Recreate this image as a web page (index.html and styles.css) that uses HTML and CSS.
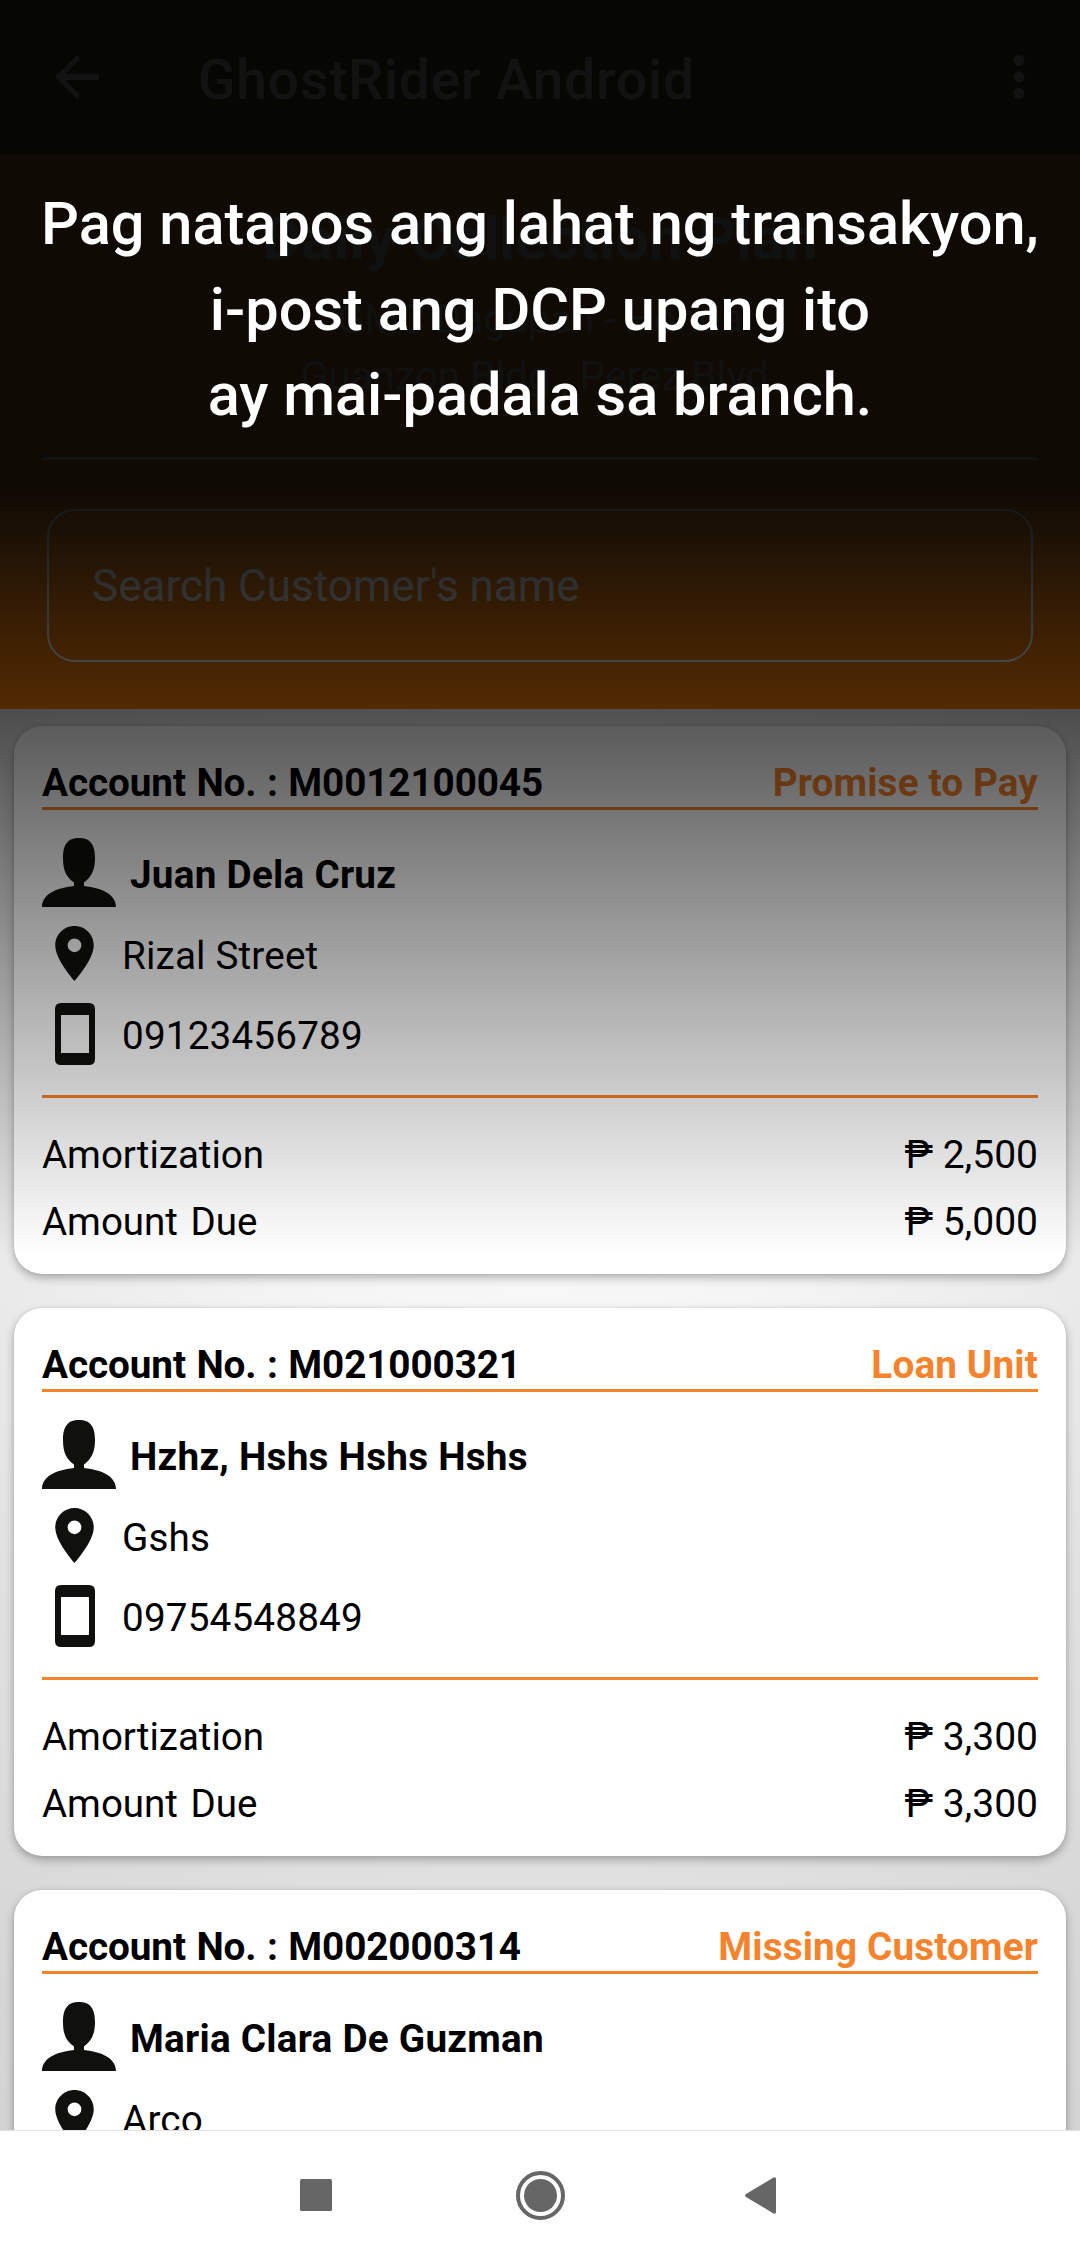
FILE: index.html
```html
<!DOCTYPE html>
<html lang="fil">
<head>
<meta charset="utf-8">
<title>GhostRider Android</title>
<link rel="stylesheet" href="styles.css">
</head>
<body>
<svg class="defs" aria-hidden="true">
  <symbol id="person" viewBox="0 0 74 69">
    <path d="M37 0C27 0 21 5 21 20C21 33 24.500 39 32 44.500V48C13 50 0 57 0 69H74C74 57 61 50 42 48V44.500C49 39 53 33 53 20C53 5 47 0 37 0Z"/>
  </symbol>
  <symbol id="pin" viewBox="5 2 14 20">
    <path fill-rule="evenodd" d="M12 2C8.130 2 5 5.130 5 9c0 5.250 7 13 7 13s7-7.750 7-13c0-3.870-3.130-7-7-7zm0 9.500a2.500 2.500 0 1 1 0-5 2.500 2.500 0 0 1 0 5z"/>
  </symbol>
  <symbol id="phone" viewBox="0 0 40 62">
    <path fill-rule="evenodd" d="M6 0H34Q40 0 40 6V56Q40 62 34 62H6Q0 62 0 56V6Q0 0 6 0ZM6 12V50H34V12Z"/>
  </symbol>
</svg>
<div class="screen">
  <header class="appbar">
    <svg class="back" viewBox="0 0 44 44"><path d="M44 19H10.500L25 4 22 0 0 22 22 44 25 40 10.500 25H44Z"/></svg>
    <h1 class="appbar-title">GhostRider Android</h1>
    <svg class="more" viewBox="0 0 12 46"><circle cx="6" cy="6.500" r="5.500"/><circle cx="6" cy="23" r="5.500"/><circle cx="6" cy="39.500" r="5.500"/></svg>
  </header>
  <section class="hero">
    <h2 class="plan">Daily Collection Plan</h2>
    <p class="branch">GMC Dagupan - Honda</p>
    <p class="address">Guanzon Bldg., Perez Blvd.</p>
    <div class="search">Search Customer's name</div>
  </section>
  <main class="list">
    <article class="card">
      <div class="card-head"><span class="account">Account No. : M0012100045</span><span class="status">Promise to Pay</span></div>
      <div class="name"><svg class="i-person"><use href="#person"/></svg><span>Juan Dela Cruz</span></div>
      <div class="info"><svg class="i-pin"><use href="#pin"/></svg><span>Rizal Street</span></div>
      <div class="info tel"><svg class="i-phone"><use href="#phone"/></svg><span>09123456789</span></div>
      <div class="amounts">
        <div class="row"><span class="label">Amortization</span><span class="value">₱ 2,500</span></div>
        <div class="row"><span class="label">Amount Due</span><span class="value">₱ 5,000</span></div>
      </div>
    </article>
    <article class="card">
      <div class="card-head"><span class="account">Account No. : M021000321</span><span class="status">Loan Unit</span></div>
      <div class="name"><svg class="i-person"><use href="#person"/></svg><span>Hzhz, Hshs Hshs Hshs</span></div>
      <div class="info"><svg class="i-pin"><use href="#pin"/></svg><span>Gshs</span></div>
      <div class="info tel"><svg class="i-phone"><use href="#phone"/></svg><span>09754548849</span></div>
      <div class="amounts">
        <div class="row"><span class="label">Amortization</span><span class="value">₱ 3,300</span></div>
        <div class="row"><span class="label">Amount Due</span><span class="value">₱ 3,300</span></div>
      </div>
    </article>
    <article class="card">
      <div class="card-head"><span class="account">Account No. : M002000314</span><span class="status">Missing Customer</span></div>
      <div class="name"><svg class="i-person"><use href="#person"/></svg><span>Maria Clara De Guzman</span></div>
      <div class="info"><svg class="i-pin"><use href="#pin"/></svg><span>Arco</span></div>
    </article>
  </main>
  <nav class="navbar">
    <svg viewBox="0 0 48 48"><rect x="8" y="8" width="32" height="32" rx="1.500"/></svg>
    <svg viewBox="0 0 48 48"><circle cx="24.500" cy="24.500" r="16.500"/><circle class="ring" cx="24.500" cy="24.500" r="22.500"/></svg>
    <svg viewBox="0 0 48 48"><path d="M36 8V41Q36 43.500 33.500 42.500L6 26Q4 24.500 6 23L33.500 6.500Q36 5.500 36 8Z"/></svg>
  </nav>
  <div class="scrim">
    <p class="tip">Pag natapos ang lahat ng transakyon,<br>i-post ang DCP upang ito<br>ay mai-padala sa branch.</p>
  </div>
</div>
</body>
</html>
```

FILE: styles.css
```css
* { box-sizing: border-box; margin: 0; padding: 0; }
body { font-family: Roboto, "Noto Sans", sans-serif; color: #000; }
svg { fill: #10100e; flex: none; }
.defs { display: none; }
.screen {
  position: relative;
  width: 1080px;
  height: 2260px;
  overflow: hidden;
  display: flex;
  flex-direction: column;
}
.appbar {
  flex: none;
  height: 154px;
  background: #4e4e2c;
  color: #fff;
  display: flex;
  align-items: center;
  padding: 0 55px 0 55px;
}
.appbar svg { fill: #fff; }
.back { width: 44px; height: 44px; }
.appbar-title {
  flex: 1;
  margin-left: 99px;
  padding-top: 5px;
  font-size: 55px;
  font-weight: 500;
  letter-spacing: .9px;
}
.more { width: 12px; height: 46px; }

.hero {
  flex: none;
  height: 555px;
  background: linear-gradient(to bottom, #dc8f38 0, #dc8f38 300px, #f47e09 480px);
  color: #e4eeee;
  text-align: center;
  padding: 50px 42px 0;
}
.plan { font-size: 60px; line-height: 70px; font-weight: 700; }
.branch { font-size: 40px; line-height: 48px; margin-top: 22px; }
.address {
  font-size: 40.500px;
  line-height: 50px;
  margin-top: 7px;
  padding-bottom: 56px;
  border-bottom: 3px solid #f0fbff;
}
.search {
  height: 153px;
  margin: 49px 5px 0;
  border: 2px solid #f0fbff;
  border-radius: 28px;
  padding: 0 43px;
  display: flex;
  align-items: center;
  font-size: 44px;
  color: #f7fbfd;
}

.list {
  flex: 1;
  min-height: 0;
  overflow: hidden;
  background: radial-gradient(ellipse 1400px 1500px at 50% 30%, #fafafa 0%, #f5f5f5 18%, #ebebeb 38%, #e0e0e0 50%, #d6d6d6 68%, #cfcfcf 100%);
  padding: 17px 14px 0;
  display: flex;
  flex-direction: column;
  gap: 34px;
}
.card {
  flex: none;
  height: 548px;
  border-radius: 28px;
  background: #fff;
  box-shadow: 0 4px 10px rgba(0, 0, 0, .28), 0 0 3px rgba(0, 0, 0, .1);
  padding: 32px 28px 0;
  font-size: 38.700px;
}
.card-head {
  display: flex;
  justify-content: space-between;
  height: 52px;
  line-height: 50px;
  font-weight: 700;
  border-bottom: 3px solid #f5832b;
}
.account { word-spacing: 1px; letter-spacing: -.1px; }
.status { color: #f5832b; letter-spacing: .15px; }
.name {
  display: flex;
  gap: 14px;
  align-items: center;
  height: 69px;
  margin-top: 28px;
  font-weight: 700;
  letter-spacing: .25px;
}
.name span { padding-top: 4px; }
.i-person { width: 74px; height: 69px; }
.info {
  display: flex;
  align-items: center;
  height: 55px;
  padding-left: 13px;
  gap: 28px;
  margin-top: 19px;
  letter-spacing: .15px;
}
.i-pin { width: 39px; height: 55px; }
.i-phone { width: 40px; height: 62px; }
.info span { padding-top: 4px; }
.tel { margin-top: 22px; height: 62px; gap: 27px; }
.tel span { padding-top: 2px; }
.amounts {
  border-top: 3px solid #f5832b;
  margin-top: 30px;
  padding-top: 33px;
}
.row { display: flex; justify-content: space-between; height: 67px; line-height: 48px; font-size: 38.500px; }
.label { word-spacing: 3px; }
.value { font-size: 39px; }

.navbar {
  position: relative;
  z-index: 2;
  flex: none;
  height: 130px;
  background: #fefefe;
  border-top: 1px solid #e2e2e2;
  display: flex;
  justify-content: center;
  gap: 176px;
  padding-top: 40px;
}
.navbar svg { width: 48px; height: 48px; fill: #666; overflow: visible; }
.navbar .ring { fill: none; stroke: #666; stroke-width: 4; }

.scrim {
  position: absolute;
  inset: 0;
  background: linear-gradient(to bottom, rgba(0, 0, 0, .93) 0, rgba(0, 0, 0, .93) 490px, rgba(0, 0, 0, 0) 1255px);
}
.tip {
  padding-top: 182px;
  text-align: center;
  color: #fff;
  font-size: 59.500px;
  line-height: 85.500px;
  font-weight: 500;
}
```
